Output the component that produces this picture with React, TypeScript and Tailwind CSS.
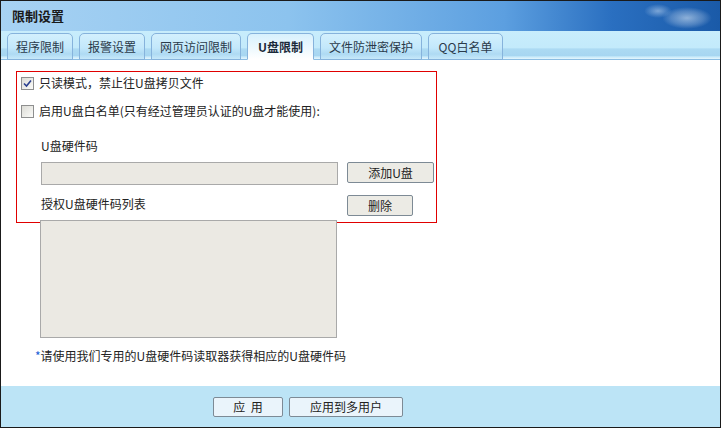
import React from "react";

const tabs = [
  { label: "程序限制", w: "w-[66px]" },
  { label: "报警设置", w: "w-[66px]" },
  { label: "网页访问限制", w: "w-[90px]" },
  { label: "U盘限制", w: "w-[67px]", active: true },
  { label: "文件防泄密保护", w: "w-[102px]" },
  { label: "QQ白名单", w: "w-[75px]" },
];

const Checkbox = ({ checked }: { checked?: boolean }) => (
  <span className="w-[13px] h-[13px] border border-[#8e8f8f] bg-gradient-to-br from-[#dcdcd6] to-[#fbfbf9] flex items-center justify-center shrink-0">
    {checked && (
      <svg width="9" height="9" viewBox="0 0 9 9">
        <path d="M1 4.5 L3.5 7 L8 1.5" stroke="#2a3f8f" strokeWidth="1.6" fill="none" />
      </svg>
    )}
  </span>
);

const Btn = ({ children, className }: { children: React.ReactNode; className: string }) => (
  <button className={`h-[21px] border border-[#7d8a95] rounded-[2px] bg-[#ecebe5] text-[12px] text-[#222] leading-none ${className}`}>
    {children}
  </button>
);

export default function App() {
  return (
    <div
      className="w-[721px] h-[428px] border border-[#1a1a1a] flex flex-col bg-white text-[12px] text-[#222]"
      style={{ fontFamily: '"Noto Sans CJK SC", "Liberation Sans", sans-serif' }}
    >
      {/* title bar */}
      <div className="h-[30px] flex items-center pl-[11px] bg-[linear-gradient(90deg,#a7d2f3_0%,#8cc3ee_40%,#5c9fe0_70%,#2a6fc0_85%,#1a5aa8_100%)] relative overflow-hidden">
        <span className="font-bold text-[13px] text-[#1a1a1a]">限制设置</span>
        <div className="absolute right-[8px] top-[6px] w-[50px] h-[22px] rounded-full bg-[radial-gradient(ellipse_at_center,rgba(215,230,245,0.6)_0%,rgba(190,210,235,0.3)_45%,rgba(255,255,255,0)_70%)]" />
        <div className="absolute right-[48px] top-[3px] w-[28px] h-[14px] rounded-full bg-[radial-gradient(ellipse_at_center,rgba(210,228,248,0.5)_0%,rgba(255,255,255,0)_70%)]" />
      </div>

      {/* tab bar */}
      <div className="h-[29px] flex items-end gap-[6px] pl-[6px] border-b border-[#8cbde2] bg-[linear-gradient(180deg,#c8edfc_0%,#c3eafb_60%,#acdaf3_64%,#a7d6f1_88%,#c5e9fa_92%,#e6f6fd_100%)]">
        {tabs.map((t) => (
          <div
            key={t.label}
            className={`${t.w} h-[27px] -mb-px flex items-center justify-center rounded-t-[5px] border border-[#86b3dc] ${
              t.active
                ? "border-b-white bg-[linear-gradient(180deg,#d8f1fd_0%,#eef9fe_60%,#ffffff_100%)] font-bold text-[#1b2a3a]"
                : "bg-[linear-gradient(180deg,#d3f0fd_0%,#c3e8fb_55%,#aedaf3_80%,#c7e9fa_100%)] text-[#2a3a4a]"
            }`}
          >
            {t.label}
          </div>
        ))}
      </div>

      {/* content */}
      <div className="flex-1 pt-[11px] pl-[15px]">
        <div className="w-[421px] h-[152px] border border-[#e00000] pl-[4px] pt-[4px]">
          <div className="flex items-center gap-[5px] h-[14px]">
            <Checkbox checked />
            <span>只读模式，禁止往U盘拷贝文件</span>
          </div>
          <div className="flex items-center gap-[5px] h-[14px] mt-[14px]">
            <Checkbox />
            <span>启用U盘白名单(只有经过管理员认证的U盘才能使用):</span>
          </div>
          <div className="pl-[20px] mt-[20px]">
            <div className="h-[16px] flex items-center">U盘硬件码</div>
            <div className="flex items-start gap-[9px] mt-[8px]">
              <div className="w-[297px] h-[23px] border border-[#a9a9a9] bg-[#ebe9e3]" />
              <Btn className="w-[87px]">添加U盘</Btn>
            </div>
            <div className="flex items-center w-[372px] mt-[10px]">
              <div className="h-[16px] flex items-center -mt-[3px] flex-1">授权U盘硬件码列表</div>
              <Btn className="w-[66px]">删除</Btn>
            </div>
          </div>
        </div>
        <div className="ml-[24px] -mt-[3px] w-[297px] h-[118px] border border-[#a9a9a9] bg-[#ebe9e3]" />
        <div className="ml-[19px] mt-[10px] h-[16px] flex items-center">
          <span className="text-[#1c5fd6]">*</span>请使用我们专用的U盘硬件码读取器获得相应的U盘硬件码
        </div>
      </div>

      {/* footer */}
      <div className="h-[41px] bg-[#bce4f6] flex items-center pl-[212px] gap-[6px]">
        <button className="w-[70px] h-[20px] border border-[#7d8a95] rounded-[2px] bg-[#eaf4fb] text-[12px] text-[#222] leading-none">
          {"应\u00a0\u00a0用"}
        </button>
        <button className="w-[114px] h-[20px] border border-[#7d8a95] rounded-[2px] bg-[#eaf4fb] text-[12px] text-[#222] leading-none">
          应用到多用户
        </button>
      </div>
    </div>
  );
}
